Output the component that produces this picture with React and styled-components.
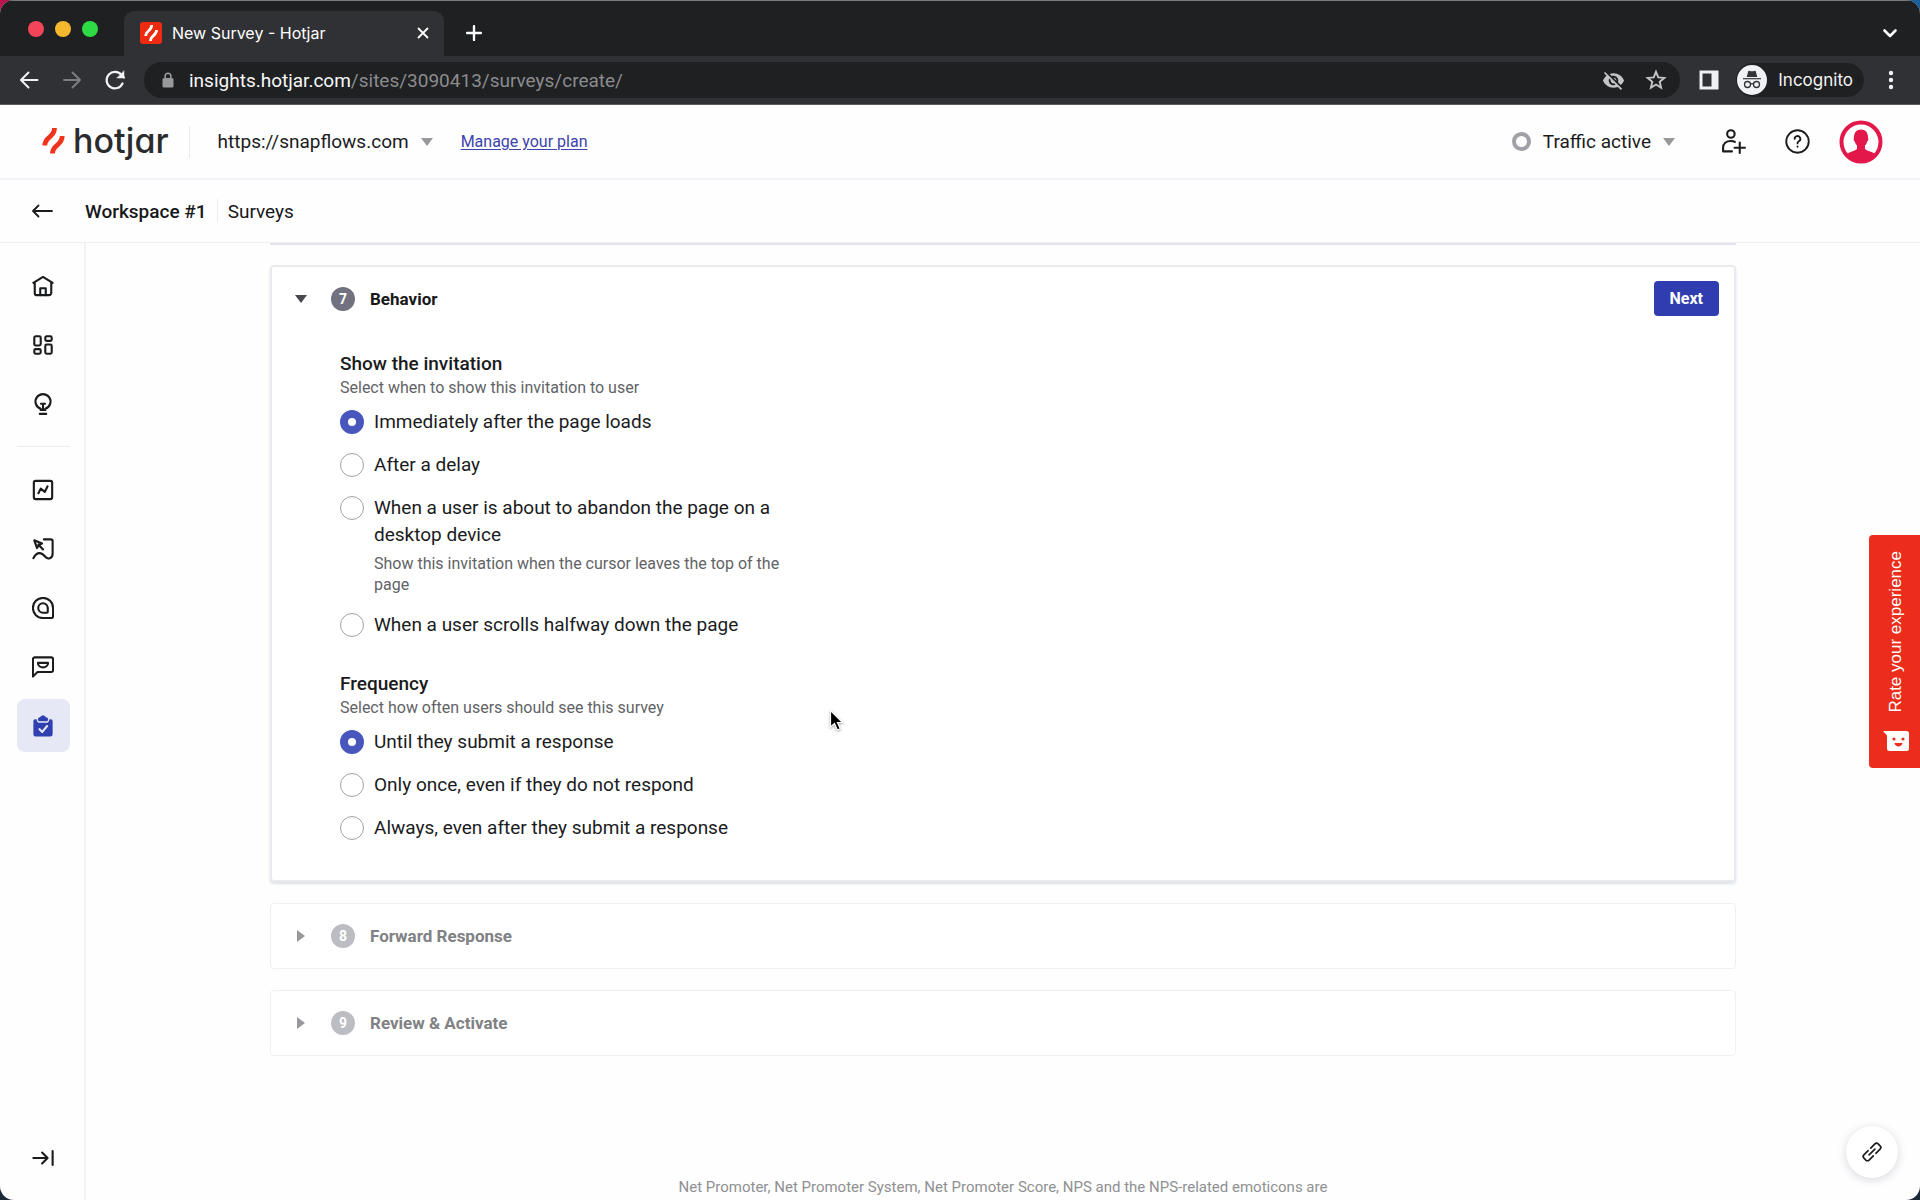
import React, { useState } from "react";
import styled, { createGlobalStyle, css } from "styled-components";

const ui = `Roboto, "Liberation Sans", sans-serif`;
const chromeFont = `Inter, Roboto, sans-serif`;

const GlobalStyle = createGlobalStyle`
  *, *::before, *::after { box-sizing: border-box; }
  body {
    margin: 0;
    overflow: hidden;
    background:
      linear-gradient(transparent 50%, #1c2838 50%),
      linear-gradient(90deg, #c0124f 0, #1f2033 60px, #1f2033 50%, #17609c 100%);
    font-family: ${ui};
    color: #1a1b1d;
  }
  button, input { font: inherit; color: inherit; }
`;

const Window = styled.div`
  display: flex;
  flex-direction: column;
  height: 100vh;
  overflow: hidden;
  border-radius: 14px;
  background: #fefefe;
`;

const IconButton = styled.button`
  display: inline-flex;
  align-items: center;
  justify-content: center;
  flex: none;
  width: ${(p) => p.$size || 24}px;
  height: ${(p) => p.$size || 24}px;
  padding: 0;
  border: 0;
  background: none;
  color: ${(p) => p.$color || "inherit"};
  cursor: pointer;
  svg { display: block; }
`;

/* browser frame */
const TabStrip = styled.div`
  display: flex;
  align-items: flex-end;
  flex: none;
  height: 56px;
  padding: 0 18px 0 28px;
  border-top: 1px solid #77797b;
  background: #1f2022;
  color: #fff;
  font-family: ${chromeFont};
`;

const Lights = styled.div`
  display: flex;
  gap: 11px;
  width: 96px;
  height: 55px;
  align-items: center;
`;

const Light = styled.span`
  width: 16px;
  height: 16px;
  border-radius: 50%;
  background: ${(p) => p.$color};
`;

const Tab = styled.div`
  display: flex;
  align-items: center;
  width: 320px;
  height: 45px;
  padding: 0 10px 2px 16px;
  border-radius: 10px 10px 0 0;
  background: #303135;
  font-size: 16px;
`;

const TabTitle = styled.span`
  flex: 1;
  margin-left: 10px;
  white-space: nowrap;
`;

const StripActions = styled.div`
  display: flex;
  flex: 1;
  justify-content: space-between;
  align-items: center;
  height: 45px;
  padding: 0 0 2px 18px;
`;

const Toolbar = styled.div`
  display: flex;
  align-items: center;
  flex: none;
  height: 49px;
  padding: 0 17px;
  border-bottom: 1px solid #5c5d60;
  background: #303135;
  color: #f1f2f4;
  font-family: ${chromeFont};
`;

const NavButtons = styled.div`
  display: flex;
  gap: 19px;
  width: 127px;
`;

const Omnibox = styled.div`
  display: flex;
  align-items: center;
  flex: 1;
  height: 36px;
  padding: 0 12px 0 16px;
  border-radius: 18px;
  background: #1f2022;
`;

const Address = styled.div`
  flex: 1;
  margin-left: 13px;
  font-family: ${ui};
  font-size: 19px;
  color: #8b8c8f;
  b { font-weight: 400; color: #f8f8f9; }
`;

const OmniActions = styled.div`
  display: flex;
  gap: 19px;
`;

const ToolbarRight = styled.div`
  display: flex;
  align-items: center;
  padding-left: 17px;
`;

const Incognito = styled.div`
  display: flex;
  align-items: center;
  gap: 11px;
  height: 34px;
  margin: 0 15px 0 15px;
  padding: 0 11px 0 1px;
  border-radius: 17px;
  background: #1f2022;
  color: #f4f4f5;
  font-size: 17px;
`;

/* application header */
const Header = styled.header`
  display: flex;
  align-items: center;
  justify-content: space-between;
  flex: none;
  height: 75px;
  padding: 0 37px 0 42px;
  border-bottom: 2px solid #f1f2f7;
`;

const Group = styled.div`
  display: flex;
  align-items: center;
  gap: ${(p) => p.$gap}px;
`;

const Brand = styled.a`
  display: flex;
  align-items: center;
  gap: 8px;
  margin-right: 20px;
  padding-bottom: 2px;
  color: #2b2b2d;
  font-family: Inter, sans-serif;
  font-size: 34px;
  font-weight: 500;
  line-height: 40px;
  font-feature-settings: "cv11";
  text-decoration: none;
`;

const Rule = styled.span`
  width: 1px;
  height: ${(p) => p.$height}px;
  background: #eaebf0;
`;

const Picker = styled.button`
  display: flex;
  align-items: center;
  gap: ${(p) => p.$gap}px;
  margin: 0 ${(p) => p.$after || 0}px 0 0;
  padding: 0;
  border: 0;
  background: none;
  font-size: 19px;
  cursor: pointer;
`;

const Caret = styled.span`
  border: 6px solid transparent;
  ${(p) =>
    p.$side
      ? css`border-left: 8px solid ${p.$color}; border-right: 0;`
      : css`border-top: 8px solid ${p.$color}; border-bottom: 0;`}
`;

const PlanLink = styled.a`
  color: #3c43ab;
  font-size: 16px;
  text-decoration: underline;
  text-underline-offset: 2px;
`;

const Ring = styled.span`
  width: 19px;
  height: 19px;
  border: 4px solid #a0a0a6;
  border-radius: 50%;
`;

const Crumbs = styled.nav`
  display: flex;
  align-items: center;
  gap: 10px;
  flex: none;
  height: 63px;
  padding: 0 30px;
  border-bottom: 1px solid #eff0f5;
  font-size: 19px;
`;

const CrumbLink = styled.a`
  color: #17181a;
  font-weight: ${(p) => (p.$strong ? 500 : 400)};
  text-decoration: none;
`;

const BackButton = styled(IconButton)`
  margin-right: 21px;
`;

/* body */
const Body = styled.div`
  display: flex;
  flex: 1;
  min-height: 0;
`;

const Sidebar = styled.nav`
  display: flex;
  flex-direction: column;
  align-items: center;
  gap: 6px;
  flex: none;
  width: 86px;
  padding: 16px 0;
  box-shadow: inset -2px 0 #f1f2f7;
`;

const SideItem = styled.button`
  display: flex;
  align-items: center;
  justify-content: center;
  width: 53px;
  height: 53px;
  padding: 0;
  border: 0;
  border-radius: 8px;
  background: ${(p) => (p.$active ? "#e6e8f6" : "none")};
  color: ${(p) => (p.$active ? "#3040b0" : "#1a1b1d")};
  cursor: pointer;
`;

const SideRule = styled.hr`
  width: 53px;
  height: 1px;
  margin: 10px 0;
  border: 0;
  background: #ecedf3;
`;

const Spacer = styled.div`
  flex: 1;
`;

const Main = styled.main`
  display: flex;
  flex-direction: column;
  flex: 1;
  min-width: 0;
  overflow: hidden;
  padding: 0 184px;
`;

const PreviousEdge = styled.div`
  flex: none;
  height: 2px;
  margin-bottom: 20px;
  background: #e3e4e8;
`;

const Card = styled.section`
  flex: none;
  margin-bottom: 21px;
  border: ${(p) => (p.$open ? "2px solid #e9eaed" : "1px solid #f0f0f3")};
  border-radius: 4px;
  background: #fff;
  box-shadow: ${(p) => (p.$open ? "0 2px 3px rgba(30, 40, 60, 0.14)" : "none")};
`;

const CardHeader = styled.div`
  display: flex;
  align-items: center;
  height: ${(p) => (p.$open ? 63 : 64)}px;
  padding: 0 15px 0 ${(p) => (p.$open ? 23 : 24)}px;
`;

const Toggle = styled.button`
  display: flex;
  align-items: center;
  flex: 1;
  padding: 0;
  border: 0;
  background: none;
  color: ${(p) => (p.$open ? "#17181a" : "#808184")};
  font-size: 17px;
  font-weight: 700;
  text-align: left;
  cursor: pointer;
`;

const CaretSlot = styled.span`
  display: flex;
  justify-content: center;
  width: 12px;
  margin-right: 24px;
`;

const Badge = styled.span`
  display: flex;
  align-items: center;
  justify-content: center;
  width: 24px;
  height: 24px;
  margin-right: 15px;
  border-radius: 50%;
  background: ${(p) => (p.$open ? "#72717f" : "#bcbcc3")};
  color: #fff;
  font-size: 14px;
  font-weight: 700;
`;

const NextButton = styled.button`
  height: 35px;
  padding: 0 16px;
  border: 0;
  border-radius: 4px;
  background: #303db0;
  color: #fff;
  font-size: 16px;
  font-weight: 700;
  cursor: pointer;
`;

const CardBody = styled.div`
  display: flex;
  flex-direction: column;
  gap: 32px;
  padding: 20px 68px 39px;
`;

const Question = styled.fieldset`
  display: flex;
  flex-direction: column;
  width: 450px;
  margin: 0;
  padding: 0;
  border: 0;
`;

const Legend = styled.legend`
  padding: 0;
  font-size: 19px;
  font-weight: 500;
  line-height: 27px;
`;

const Hint = styled.p`
  margin: ${(p) => (p.$nested ? 5 : 0)}px 0 0;
  color: #626366;
  font-size: 16px;
  line-height: ${(p) => (p.$nested ? 21 : 22)}px;
`;

const Options = styled.div`
  display: flex;
  flex-direction: column;
  gap: 16px;
  margin-top: 9px;
`;

const Option = styled.label`
  display: grid;
  grid-template-columns: 24px 1fr;
  column-gap: 10px;
  align-items: start;
  font-size: 19px;
  line-height: 27px;
  cursor: pointer;
`;

const Radio = styled.input`
  appearance: none;
  width: 24px;
  height: 24px;
  margin: 2px 0 0;
  border: 1px solid #a2a2a6;
  border-radius: 50%;
  background: #fff;
  &:checked { border: 8px solid #4856bd; }
`;

const Footnote = styled.p`
  flex: none;
  max-width: 680px;
  margin: 99px auto 0;
  color: #8f9092;
  font-size: 15px;
  line-height: 22px;
  text-align: center;
`;

/* floating pieces */
const FeedbackTab = styled.button`
  position: fixed;
  top: 535px;
  right: 0;
  display: flex;
  flex-direction: column;
  align-items: center;
  gap: 17px;
  width: 51px;
  padding: 16px 0 16px 2px;
  border: 0;
  border-radius: 4px 0 0 4px;
  background: #ec2d1c;
  color: #fff;
  font-family: "Liberation Sans", Arial, sans-serif;
  font-size: 17px;
  cursor: pointer;
`;

const Vertical = styled.span`
  writing-mode: vertical-rl;
  transform: rotate(180deg);
  line-height: 22px;
`;

const LinkFab = styled.button`
  position: fixed;
  right: 22px;
  bottom: 22px;
  display: flex;
  align-items: center;
  justify-content: center;
  width: 52px;
  height: 52px;
  padding: 0;
  border: 0;
  border-radius: 50%;
  background: #fff;
  box-shadow: 0 2px 10px rgba(20, 20, 50, 0.16);
  cursor: pointer;
`;

const Pointer = styled.svg`
  position: fixed;
  left: 829px;
  top: 709px;
  pointer-events: none;
  filter: drop-shadow(0 1px 1px rgba(0, 0, 0, 0.35));
`;

const Svg = ({ size = 24, w = 2, children, ...rest }) => (
  <svg width={size} height={size} viewBox="0 0 24 24" fill="none" stroke="currentColor" strokeWidth={w}
    strokeLinecap="round" strokeLinejoin="round" aria-hidden="true" {...rest}>
    {children}
  </svg>
);

const Flame = ({ color }) => (
  <>
    <path d="M2.800 18.500C2.800 9 12.500 11 12.500 1" stroke={color} fill="none" />
    <path d="M10.500 26.500c0-9.500 9.700-7.500 9.700-17.500" stroke={color} fill="none" />
  </>
);

const sideIcons = {
  Home: (
    <>
      <path d="M1.500 8.500 12 2l10.500 6.500M3 8v11.500A2.500 2.500 0 0 0 5.500 22h13a2.500 2.500 0 0 0 2.500-2.500V8" />
      <path d="M9 22v-7.500h6V22" />
    </>
  ),
  Dashboards: (
    <>
      <rect x="2.500" y="2.500" width="7" height="10" rx="1.500" />
      <rect x="14.500" y="2.500" width="7" height="5" rx="1.500" />
      <rect x="2.500" y="16.500" width="7" height="5" rx="1.500" />
      <rect x="14.500" y="11.500" width="7" height="10" rx="1.500" />
    </>
  ),
  Highlights: (
    <>
      <path d="M9.500 18.500v-1.300a8.200 8.200 0 1 1 5 0v1.300zM12 18V12M9.800 11.800h4.400M8.500 22.800h7" />
    </>
  ),
  Trends: (
    <>
      <rect x="2" y="2" width="20" height="20" rx="2" />
      <path d="m7 15.500 2.500-5 4.500 3.500 3-6" />
    </>
  ),
  Recordings: (
    <>
      <path d="M13 1.500h7.500a2 2 0 0 1 2 2V17c0 6-5.500 6.500-8 3.500s-4-4.500-7-4-4.500 2.500-6 5.500" />
      <path d="m2.500 2.500 3 8.500 2-3.500L11 6zM7 7l5 5.500" />
    </>
  ),
  Heatmaps: (
    <>
      <path d="M12 1a11 11 0 0 0 0 22h9a2 2 0 0 0 2-2v-9A11 11 0 0 0 12 1z" />
      <path d="M12 6.800a5.200 5.200 0 0 0 0 10.400h4.200a1 1 0 0 0 1-1V12A5.200 5.200 0 0 0 12 6.800z" />
    </>
  ),
  Feedback: (
    <>
      <path d="M1 22.500V3.500a2 2 0 0 1 2-2h18a2 2 0 0 1 2 2v12a2 2 0 0 1-2 2H6z" />
      <path d="M6.500 7.500h11c0 6.500-11 6.500-11 0z" />
    </>
  ),
  Surveys: (
    <>
      <path d="M3.500 4.500h1.500c.3 2.500 1.500 4 3.500 4h7c2 0 3.200-1.500 3.500-4h1.500a2 2 0 0 1 2 2v14.500a2.500 2.500 0 0 1-2.500 2.500H4A2.500 2.500 0 0 1 1.500 21V6.500a2 2 0 0 1 2-2z" fill="currentColor" stroke="none" />
      <path d="M6.500 5.200c0-2 .8-2.700 2.300-2.700C10 0 14 0 15.200 2.500c1.500 0 2.300.7 2.300 2.700 0 .8-.6 1.500-1.400 1.500H7.900C7.100 6.700 6.500 6 6.500 5.200z" fill="currentColor" stroke="none" />
      <path d="m8.200 15.500 3 3 5.300-6.500" stroke="#e6e8f6" />
    </>
  ),
};

const invitation = [
  { label: "Immediately after the page loads" },
  { label: "After a delay" },
  {
    label: "When a user is about to abandon the page on a desktop device",
    hint: "Show this invitation when the cursor leaves the top of the page",
  },
  { label: "When a user scrolls halfway down the page" },
];

const frequency = [
  { label: "Until they submit a response" },
  { label: "Only once, even if they do not respond" },
  { label: "Always, even after they submit a response" },
];

function RadioQuestion({ name, title, hint, options }) {
  const [picked, setPicked] = useState(0);
  return (
    <Question>
      <Legend>{title}</Legend>
      <Hint>{hint}</Hint>
      <Options>
        {options.map((o, i) => (
          <Option key={o.label} htmlFor={`${name}-${i}`}>
            <Radio type="radio" id={`${name}-${i}`} name={name} checked={picked === i} onChange={() => setPicked(i)} />
            <div>
              {o.label}
              {o.hint && <Hint as="div" $nested>{o.hint}</Hint>}
            </div>
          </Option>
        ))}
      </Options>
    </Question>
  );
}

function Step({ number, title, open, children }) {
  return (
    <Card $open={open}>
      <CardHeader $open={open}>
        <Toggle $open={open} aria-expanded={!!open}>
          <CaretSlot><Caret $side={!open} $color={open ? "#48494c" : "#98989c"} /></CaretSlot>
          <Badge $open={open}>{number}</Badge>
          {title}
        </Toggle>
        {open && <NextButton>Next</NextButton>}
      </CardHeader>
      {children}
    </Card>
  );
}

function BrowserFrame() {
  return (
    <>
      <TabStrip>
        <Lights>
          <Light $color="#f2455a" />
          <Light $color="#f5b82e" />
          <Light $color="#2fdb45" />
        </Lights>
        <Tab>
          <svg width="22" height="22" viewBox="0 0 22 22" aria-hidden="true">
            <rect width="22" height="22" rx="3" fill="#ee2a10" />
            <g transform="translate(4 2.500) scale(.62)" strokeWidth="4.400"><Flame color="#fff" /></g>
          </svg>
          <TabTitle>New Survey - Hotjar</TabTitle>
          <IconButton $size={22} aria-label="Close tab"><Svg size={18} w={2.400}><path d="m6 6 12 12M18 6 6 18" /></Svg></IconButton>
        </Tab>
        <StripActions>
          <IconButton aria-label="New tab"><Svg size={22} w={2.600}><path d="M12 4.500v15M4.500 12h15" /></Svg></IconButton>
          <IconButton aria-label="Search tabs"><Svg size={24} w={2.600}><path d="m6.500 9.500 5.500 5.500 5.500-5.500" /></Svg></IconButton>
        </StripActions>
      </TabStrip>
      <Toolbar>
        <NavButtons>
          <IconButton aria-label="Back"><Svg><path d="M20.500 12h-16M11.500 4.500 4 12l7.500 7.500" /></Svg></IconButton>
          <IconButton aria-label="Forward" $color="#7d7e81"><Svg><path d="M4 12h16M12.500 4.500 20 12l-7.500 7.500" /></Svg></IconButton>
          <IconButton aria-label="Reload">
            <Svg w={2.200}><path d="M19.500 15.500A8.300 8.300 0 1 1 18.500 7L21 9.500" /><path d="M21 3v7h-7z" fill="currentColor" strokeWidth="0.500" /></Svg>
          </IconButton>
        </NavButtons>
        <Omnibox>
          <svg width="16" height="18" viewBox="0 0 16 18" aria-hidden="true">
            <rect x="2.500" y="7" width="11" height="9.500" rx="1.500" fill="#98999b" />
            <path d="M5.200 7.500V5a2.800 2.800 0 0 1 5.600 0v2.500" fill="none" stroke="#98999b" strokeWidth="1.600" />
          </svg>
          <Address><b>insights.hotjar.com</b>/sites/3090413/surveys/create/</Address>
          <OmniActions>
            <IconButton aria-label="Third-party cookies blocked" $color="#c4c5c7">
              <svg width="23" height="23" viewBox="0 0 24 24" fill="currentColor" aria-hidden="true">
                <path d="M12 7c2.760 0 5 2.240 5 5 0 .65-.13 1.260-.36 1.830l2.920 2.920c1.510-1.260 2.700-2.890 3.430-4.750-1.730-4.390-6-7.500-11-7.500-1.400 0-2.740.25-3.980.7l2.160 2.160C10.740 7.130 11.350 7 12 7zM2 4.270l2.280 2.280.46.46C3.080 8.300 1.780 10.020 1 12c1.730 4.390 6 7.500 11 7.500 1.550 0 3.030-.3 4.380-.84l.42.42L19.730 22 21 20.730 3.270 3 2 4.270zM7.530 9.800l1.550 1.550c-.05.21-.08.43-.08.65 0 1.660 1.340 3 3 3 .22 0 .44-.03.65-.08l1.550 1.550c-.67.33-1.410.53-2.200.53-2.760 0-5-2.240-5-5 0-.79.2-1.530.53-2.200zm4.310-.78 3.150 3.150.02-.16c0-1.660-1.340-3-3-3l-.17.01z" />
              </svg>
            </IconButton>
            <IconButton aria-label="Bookmark this tab" $color="#c4c5c7">
              <Svg size={24} w={1.900} strokeLinejoin="miter"><path d="m12 3.800 2.300 5.600 6 .5-4.600 3.900 1.400 5.900-5.100-3.200-5.100 3.200 1.400-5.900-4.600-3.900 6-.5z" /></Svg>
            </IconButton>
          </OmniActions>
        </Omnibox>
        <ToolbarRight>
          <IconButton aria-label="Side panel">
            <svg width="20" height="20" viewBox="0 0 20 20" aria-hidden="true">
              <path fillRule="evenodd" fill="#eef0f4" d="M.5.500h19v19H.500zM3.500 3.500v13h9v-13z" />
            </svg>
          </IconButton>
          <Incognito>
            <svg width="30" height="30" viewBox="0 0 30 30" aria-hidden="true">
              <circle cx="15" cy="15" r="15" fill="#f1f2f5" />
              <path d="M11.300 6.300c.3-.8 1-.6 1.600-.4.9.4 3.300.4 4.200 0 .6-.2 1.300-.4 1.600.4L20.300 12H9.700z" fill="#333438" />
              <path d="M6 13.700h18" stroke="#333438" strokeWidth="1.200" />
              <g fill="none" stroke="#333438" strokeWidth="1.300">
                <circle cx="10.500" cy="19.500" r="3" /><circle cx="19.500" cy="19.500" r="3" /><path d="M13.500 19.200c.8-.6 2.200-.6 3 0" />
              </g>
            </svg>
            Incognito
          </Incognito>
          <IconButton aria-label="Browser menu">
            <Svg fill="currentColor" stroke="none"><circle cx="12" cy="5" r="2.200" /><circle cx="12" cy="12" r="2.200" /><circle cx="12" cy="19" r="2.200" /></Svg>
          </IconButton>
        </ToolbarRight>
      </Toolbar>
    </>
  );
}

export default function App() {
  return (
    <>
      <GlobalStyle />
      <Window>
        <BrowserFrame />
        <Header>
          <Group $gap={28}>
            <Group $gap={0}>
              <Brand href="#">
                <svg width="23" height="27" viewBox="0 0 23 27" strokeWidth="4.800" aria-hidden="true"><Flame color="#f0331b" /></svg>
                hotjar
              </Brand>
              <Rule $height={32} />
            </Group>
            <Picker $gap={12}>https://snapflows.com<Caret $color="#98989c" /></Picker>
            <PlanLink href="#">Manage your plan</PlanLink>
          </Group>
          <Group $gap={20}>
            <Picker $gap={12} $after={16}>
              <Ring />Traffic active<Caret $color="#98989c" />
            </Picker>
            <IconButton $size={44} aria-label="Invite people">
              <Svg size={25} w={2}>
                <circle cx="9.500" cy="4.800" r="3.600" />
                <path d="M10.500 21.500H2V18c0-4 3-6.500 7.500-6.500 1.500 0 2.800.3 3.800.9M18 13v10M13 18h10" />
              </Svg>
            </IconButton>
            <IconButton $size={44} aria-label="Help">
              <Svg size={25} w={1.800}>
                <circle cx="12" cy="12" r="10.800" />
                <path d="M9.300 9.500a2.700 2.700 0 1 1 4 2.300c-.9.500-1.300 1-1.300 2M12 16.800v.3" />
              </Svg>
            </IconButton>
            <IconButton $size={44} aria-label="Account">
              <svg width="44" height="44" viewBox="0 0 44 44" aria-hidden="true">
                <circle cx="22" cy="22" r="19.500" fill="#fff" stroke="#e3174a" strokeWidth="4" />
                <path d="M22 9.500c4.500 0 7 3 7 7.500 0 1 .6 1.500.3 2.800-.2 1-.9 1.300-1.200 2.200-.4 1.500-1.100 2.700-2.100 3.500v3.500c2 2 6.500 2.500 9.500 4.500A19.500 19.500 0 0 1 22 41.500 19.500 19.500 0 0 1 8.500 33.500c3-2 7.500-2.500 9.500-4.500v-3.500c-1-.8-1.700-2-2.100-3.500-.3-.9-1-1.200-1.200-2.200-.3-1.300.3-1.800.3-2.800 0-4.500 2.500-7.500 7-7.500z" fill="#e3174a" />
              </svg>
            </IconButton>
          </Group>
        </Header>
        <Crumbs aria-label="Breadcrumb">
          <BackButton aria-label="Go back"><Svg w={1.800}><path d="M22 12H3M8.500 6.500 3 12l5.500 5.500" /></Svg></BackButton>
          <CrumbLink href="#" $strong>Workspace #1</CrumbLink>
          <Rule $height={24} />
          <CrumbLink href="#">Surveys</CrumbLink>
        </Crumbs>
        <Body>
          <Sidebar aria-label="Main">
            {Object.entries(sideIcons).map(([name, icon]) => (
              <React.Fragment key={name}>
                <SideItem $active={name === "Surveys"} aria-label={name}><Svg size={22} w={2.300}>{icon}</Svg></SideItem>
                {name === "Highlights" && <SideRule />}
              </React.Fragment>
            ))}
            <Spacer />
            <SideItem aria-label="Expand menu"><Svg size={22} w={2.300}><path d="M1.500 12H17M11 6l6 6-6 6M22.500 4.500v15" /></Svg></SideItem>
          </Sidebar>
          <Main>
            <PreviousEdge />
            <Step number={7} title="Behavior" open>
              <CardBody>
                <RadioQuestion name="invitation" title="Show the invitation" hint="Select when to show this invitation to user" options={invitation} />
                <RadioQuestion name="frequency" title="Frequency" hint="Select how often users should see this survey" options={frequency} />
              </CardBody>
            </Step>
            <Step number={8} title="Forward Response" />
            <Step number={9} title="Review & Activate" />
            <Footnote>Net Promoter, Net Promoter System, Net Promoter Score, NPS and the NPS-related emoticons are</Footnote>
          </Main>
        </Body>
      </Window>
      <FeedbackTab>
        <Vertical>Rate your experience</Vertical>
        <svg width="26" height="22" viewBox="0 0 26 22" aria-hidden="true">
          <path d="M0 1h23.500A2.500 2.500 0 0 1 26 3.500v15a2.500 2.500 0 0 1-2.500 2.500h-17A2.500 2.500 0 0 1 4 18.500V5.500z" fill="#fff" />
          <g fill="#ec2d1c"><circle cx="11" cy="9" r="1.600" /><circle cx="20" cy="9" r="1.600" /><path d="M11.500 13h8c-.5 4.500-7.500 4.500-8 0z" /></g>
        </svg>
      </FeedbackTab>
      <LinkFab aria-label="Copy link">
        <Svg size={22} w={1.800}>
          <g transform="rotate(-45 12 12)">
            <path d="M10 8H3.500A2.500 2.500 0 0 0 1 10.500v3A2.500 2.500 0 0 0 3.500 16H10M14 8h6.500a2.500 2.500 0 0 1 2.500 2.500v3a2.500 2.500 0 0 1-2.500 2.500H14M7.500 12h9" />
          </g>
        </Svg>
      </LinkFab>
      <Pointer width="15" height="23" viewBox="0 0 15 23" aria-hidden="true">
        <path d="M1.500 1.500v16.500l4-3.500 2.800 6.500 3-1.300-2.800-6.200h5z" fill="#000" stroke="#fff" strokeWidth="1.200" />
      </Pointer>
    </>
  );
}
